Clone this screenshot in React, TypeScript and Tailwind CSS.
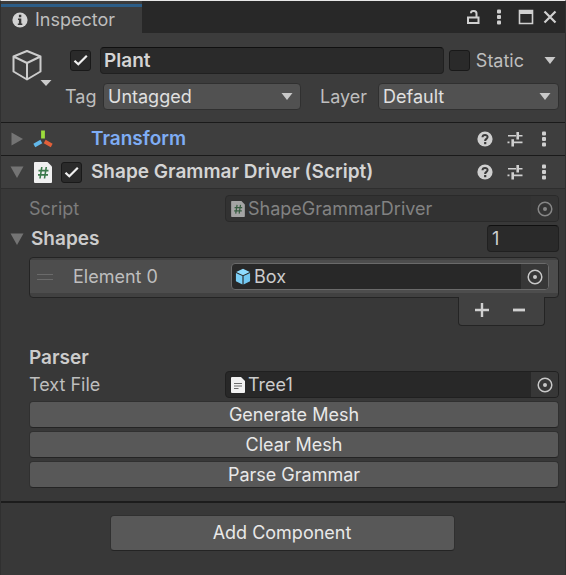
import { useState } from "react";
import type { ReactNode } from "react";

function Check({ label, defaultChecked = false }: { label: string; defaultChecked?: boolean }) {
  return (
    <span className="relative flex size-[21px] shrink-0">
      <input
        type="checkbox"
        aria-label={label}
        defaultChecked={defaultChecked}
        className="peer size-full appearance-none rounded-[3px] border border-[#191919] bg-[#2a2a2a]"
      />
      <svg
        viewBox="0 0 21 21"
        className="pointer-events-none absolute inset-0 hidden size-full peer-checked:block"
        fill="none"
        stroke="#f0f0f0"
        strokeWidth="2.2"
      >
        <path d="M4.5 10.700 8.3 14.3 16.8 5.700" />
      </svg>
    </span>
  );
}

function Dropdown({ id, options, className }: { id: string; options: string[]; className: string }) {
  return (
    <span className={`relative flex h-[27px] ${className}`}>
      <select
        id={id}
        className="h-full w-full appearance-none rounded border border-[#303030] bg-[#515151] pl-1 text-[#e0e0e0]"
      >
        {options.map((o) => (
          <option key={o}>{o}</option>
        ))}
      </select>
      <svg viewBox="0 0 12 8" className="pointer-events-none absolute top-[10px] right-2 h-2 w-3" fill="#c8c8c8">
        <path d="M.5 0h11L6 7z" />
      </svg>
    </span>
  );
}

function Dots() {
  return (
    <svg viewBox="0 0 6 16" className="h-4 w-[6px]" fill="#d0d0d0">
      <rect x="1" y="0.5" width="4" height="4" rx="1" />
      <rect x="1" y="6" width="4" height="4" rx="1" />
      <rect x="1" y="11.5" width="4" height="4" rx="1" />
    </svg>
  );
}

function HeaderActions() {
  return (
    <div className="ml-auto flex items-center pr-[18px]">
      <button aria-label="Help" className="flex">
        <svg viewBox="0 0 16 16" className="size-4">
          <circle cx="8" cy="8" r="7.6" fill="#cfcfcf" />
          <path
            d="M5.5 6.3C5.5 3.2 10.6 3.3 10.6 6.1 10.6 7.9 8.1 7.9 8.1 9.9"
            fill="none"
            stroke="#3a3a3a"
            strokeWidth="2"
          />
          <rect x="7.1" y="11" width="2.2" height="2.2" fill="#3a3a3a" />
        </svg>
      </button>
      <button aria-label="Presets" className="ml-[14px] flex">
        <svg viewBox="0 0 16 16" className="size-4" fill="#d0d0d0">
          <path d="M1 4h8v1.6H1zM12 4h3.500v1.6h-3.500zM9.4 1h2.6v7.4H9.4z" />
          <path d="M0.500 10.600h2v1.600h-2zM7 10.600h8.500v1.600H7zM4.400 8.200H7v7.400H4.400z" />
        </svg>
      </button>
      <button aria-label="More" className="ml-[18px] flex">
        <Dots />
      </button>
    </div>
  );
}

function Foldout({ label, open = false }: { label: string; open?: boolean }) {
  const [isOpen, setOpen] = useState(open);
  return (
    <button aria-label={label} aria-expanded={isOpen} onClick={() => setOpen(!isOpen)} className="flex shrink-0">
      <svg viewBox="0 0 14 14" className="size-[14px]" fill="#747474">
        {isOpen ? <path d="M.5 1.500h13L7 13z" /> : <path d="M1.500 .5v13L13 7z" />}
      </svg>
    </button>
  );
}

function ScriptIcon({ className }: { className: string }) {
  return (
    <svg viewBox="0 0 18 21" className={className}>
      <path d="M1 0h12.500L18 4.500V20a1 1 0 0 1-1 1H1a1 1 0 0 1-1-1V1a1 1 0 0 1 1-1z" fill="#f0f0f0" />
      <path d="M7.800 5 6 16.500M12.300 5 10.500 16.500M4.500 8.600h10M4 12.900h10" stroke="#3c7a4c" strokeWidth="1.600" fill="none" />
    </svg>
  );
}

function TextIcon() {
  return (
    <svg viewBox="0 0 14 16" className="h-4 w-[14px] shrink-0">
      <path d="M1 0h9l4 4v11a1 1 0 0 1-1 1H1a1 1 0 0 1-1-1V1a1 1 0 0 1 1-1z" fill="#f2f2f2" />
      <path d="M3 6.500h8M3 9h8M3 11.500h4.500" stroke="#6b6b6b" strokeWidth="1" />
    </svg>
  );
}

function BoxIcon() {
  return (
    <svg viewBox="0 0 16 18" className="h-[17px] w-4 shrink-0">
      <path d="M8 .8 15.200 4.200 8 7.600 .8 4.200z" fill="#8fdcff" />
      <path d="M.5 5.300 7.400 8.600v9L.5 14z" fill="#7bd0f8" />
      <path d="M15.500 5.300 8.600 8.600v9l6.900-3.600z" fill="#72c8f2" />
    </svg>
  );
}

function ObjectField({
  id,
  icon,
  value,
  pad = "pl-[5px]",
  border = "border-[#202020]",
  disabled = false,
}: {
  id: string;
  icon: ReactNode;
  value: string;
  pad?: string;
  border?: string;
  disabled?: boolean;
}) {
  return (
    <div
      className={`flex h-[27px] min-w-0 flex-1 items-center overflow-hidden rounded border ${border} ${pad} ${
        disabled ? "bg-[#323232]" : "bg-[#282828]"
      }`}
    >
      {icon}
      <input
        id={id}
        readOnly
        disabled={disabled}
        value={value}
        className={`ml-[3px] min-w-0 flex-1 bg-transparent ${disabled ? "text-[#828282]" : "text-[#cccccc]"}`}
      />
      <button
        aria-label={`Select ${value}`}
        disabled={disabled}
        className={`flex h-full w-[27px] items-center justify-center ${
          disabled ? "bg-[#343434] text-[#868686]" : "bg-[#373737] text-[#c8c8c8]"
        }`}
      >
        <svg viewBox="0 0 16 16" className="size-4">
          <circle cx="8" cy="8" r="6.800" fill="none" stroke="currentColor" strokeWidth="1.500" />
          <circle cx="8" cy="8" r="2" fill="currentColor" />
        </svg>
      </button>
    </div>
  );
}

function ActionButton({ children, className }: { children: string; className: string }) {
  return (
    <button className={`rounded border border-[#303030] border-b-[#242424] bg-[#585858] text-[#e8e8e8] ${className}`}>
      {children}
    </button>
  );
}

export default function App() {
  return (
    <main className="flex min-h-screen flex-col border-x border-t border-x-[#303030] border-t-[#e8e8e8] bg-[#383838] font-['Inter','Liberation_Sans',sans-serif] text-[18px] leading-[22px] text-[#bebebe]">
      <div className="flex h-8 bg-[#282828]">
        <div className="flex w-[141px] flex-col bg-[#3c3c3c]">
          <div className="mt-[3px] h-[3px] bg-[#2c5d87]" />
          <h1 className="flex flex-1 items-center gap-[7px] pl-[11px]">
            <svg viewBox="0 0 16 16" className="size-4">
              <circle cx="8" cy="8" r="7.600" fill="#d2d2d2" />
              <path d="M6.900 2.800h2.400v2.400H6.900zM6 6.500h3.300v5h1V13H5.800v-1.500h1.100V8H6z" fill="#383838" />
            </svg>
            Inspector
          </h1>
        </div>
        <div className="ml-auto flex items-center pr-2">
          <button aria-label="Lock" className="flex">
            <svg viewBox="0 0 14 16" className="h-4 w-[14px]" fill="none" stroke="#d0d0d0" strokeWidth="2">
              <rect x="2" y="8.500" width="10.500" height="5.500" />
              <path d="M10.500 8V4.500Q10.500 2 8 2H7Q5 2 5 4.200" />
            </svg>
          </button>
          <button aria-label="Menu" className="ml-4 flex">
            <Dots />
          </button>
          <button aria-label="Maximize" className="ml-4 flex">
            <svg viewBox="0 0 16 16" className="size-4">
              <path d="M1.500 1.500h13v13h-13z" fill="none" stroke="#d0d0d0" strokeWidth="1.600" />
              <path d="M1 1h14v4H1z" fill="#d0d0d0" />
            </svg>
          </button>
          <button aria-label="Close" className="ml-[9px] flex">
            <svg viewBox="0 0 14 14" className="size-[14px]" stroke="#d0d0d0" strokeWidth="2.200">
              <path d="M1.500 1.500l11 11M12.500 1.500l-11 11" />
            </svg>
          </button>
        </div>
      </div>

      <header className="flex h-[90px] border-b border-[#1a1a1a] bg-[#3c3c3c] pt-[14px] pr-[6px]">
        <button aria-label="Object icon" className="flex w-16 shrink-0 items-start pl-[10px]">
          <svg viewBox="0 0 42 40" className="h-10 w-[42px]" fill="none" stroke="#cccccc" strokeWidth="2">
            <path d="M16 4 29.500 9.500v15L16 32.500 2.500 24.500v-15zM2.500 9.500 16 16l13.500-6.500M16 16v16.500" strokeLinejoin="round" />
            <path d="M29.500 33h11L35 39z" fill="#cccccc" stroke="none" />
          </svg>
        </button>
        <div className="flex min-w-0 flex-1 flex-col gap-[9px]">
          <div className="flex h-[27px] items-center pl-[5px]">
            <Check label="Active" defaultChecked />
            <input
              aria-label="Name"
              defaultValue="Plant"
              className="ml-[9px] h-full min-w-0 flex-1 rounded border border-[#202020] border-t-[#101010] bg-[#2a2a2a] pl-[3px] text-[19px] font-semibold text-[#d4d4d4]"
            />
            <label className="ml-[5px] flex items-center gap-[6px]">
              <Check label="Static" />
              Static
            </label>
            <button aria-label="Static options" className="mr-[3px] ml-[20px] flex">
              <svg viewBox="0 0 12 8" className="h-2 w-3" fill="#c8c8c8">
                <path d="M.5 0h11L6 7z" />
              </svg>
            </button>
          </div>
          <div className="flex h-[27px] items-center">
            <label htmlFor="tag" className="w-[38px]">
              Tag
            </label>
            <Dropdown id="tag" options={["Untagged"]} className="min-w-0 flex-[197]" />
            <label htmlFor="layer" className="ml-[19px] w-[58px]">
              Layer
            </label>
            <Dropdown id="layer" options={["Default"]} className="min-w-0 flex-[180]" />
          </div>
        </div>
      </header>

      <section className="flex h-[33px] items-center border-b border-[#1a1a1a] bg-[#3e3e3e] pl-[9px]">
        <Foldout label="Transform" />
        <svg viewBox="0 0 20 18" className="ml-[9px] h-[18px] w-5" strokeWidth="3.800" strokeLinecap="butt">
          <path d="M10 .5V8.500" stroke="#9bdc3c" />
          <path d="M8.300 11.500 1.300 15.500" stroke="#62b8ea" />
          <path d="M11.700 11.500 18.700 15.500" stroke="#e2603a" />
        </svg>
        <h2 className="ml-[38px] text-[19px] font-semibold text-[#7fadf5]">Transform</h2>
        <HeaderActions />
      </section>

      <section>
        <div className="flex h-[33px] items-center border-b border-[#2e2e2e] bg-[#3e3e3e] pl-[9px]">
          <Foldout label="Shape Grammar Driver" open />
          <ScriptIcon className="mr-[9px] ml-[10px] h-[21px] w-[18px]" />
          <Check label="Enabled" defaultChecked />
          <h2 className="ml-[9px] text-[19px] font-semibold text-[#d4d4d4]">Shape Grammar Driver (Script)</h2>
          <HeaderActions />
        </div>

        <div className="flex flex-col pt-[6px] pr-[6px] pl-7">
          <div className="flex items-center">
            <label htmlFor="script" className="w-[196px] text-[#7c7c7c]">
              Script
            </label>
            <ObjectField
              id="script"
              disabled
              border="border-[#2a2a2a]"
              icon={<ScriptIcon className="h-4 w-[14px] shrink-0 opacity-60" />}
              value="ShapeGrammarDriver"
            />
          </div>

          <div className="-ml-[19px] mt-[3px] flex items-center">
            <Foldout label="Shapes" open />
            <label htmlFor="size" className="ml-[7px] text-[19px] font-semibold text-[#cccccc]">
              Shapes
            </label>
            <input
              id="size"
              defaultValue="1"
              className="ml-auto h-[27px] w-[72px] rounded border border-[#202020] border-t-[#101010] bg-[#2a2a2a] pl-1 text-[#d0d0d0]"
            />
          </div>

          <div className="mt-[5px] rounded border border-[#242424] bg-[#414141] pt-[2px] pb-1">
            <div className="flex h-[33px] items-center bg-[#4d4d4d] pr-[9px] pl-[7px]">
              <svg viewBox="0 0 16 6" className="h-[6px] w-4" stroke="#6a6a6a" strokeWidth="1">
                <path d="M0 .5h16M0 5.500h16" />
              </svg>
              <label htmlFor="element" className="ml-5 w-[158px]">
                Element 0
              </label>
              <ObjectField id="element" border="border-[#6a6a6a]" pad="pl-[3px]" icon={<BoxIcon />} value="Box" />
            </div>
          </div>
          <div className="-mt-px mr-[14px] flex h-[29px] w-[87px] items-center self-end rounded-b border border-t-0 border-[#242424] bg-[#414141] px-[15px]">
            <button aria-label="Add element" className="flex">
              <svg viewBox="0 0 16 16" className="size-4" stroke="#d0d0d0" strokeWidth="2.400">
                <path d="M1 7h14M8 0v14" />
              </svg>
            </button>
            <button aria-label="Remove element" className="ml-[21px] flex">
              <svg viewBox="0 0 16 16" className="size-4" stroke="#d0d0d0" strokeWidth="2.800">
                <path d="M2 7h12" />
              </svg>
            </button>
          </div>

          <h3 className="mt-[21px] text-[19px] font-semibold text-[#cccccc]">Parser</h3>
          <div className="mt-[2px] flex items-center">
            <label htmlFor="file" className="w-[196px]">
              Text File
            </label>
            <ObjectField id="file" icon={<TextIcon />} value="Tree1" />
          </div>
          <div className="mt-[3px] flex flex-col gap-[3px]">
            <ActionButton className="h-[27px]">Generate Mesh</ActionButton>
            <ActionButton className="h-[27px]">Clear Mesh</ActionButton>
            <ActionButton className="h-[27px]">Parse Grammar</ActionButton>
          </div>
        </div>
      </section>

      <footer className="mt-[13px] flex justify-center border-t-2 border-[#1c1c1c] pt-3 pr-[2px]">
        <ActionButton className="h-[36px] w-[345px]">Add Component</ActionButton>
      </footer>
    </main>
  );
}
